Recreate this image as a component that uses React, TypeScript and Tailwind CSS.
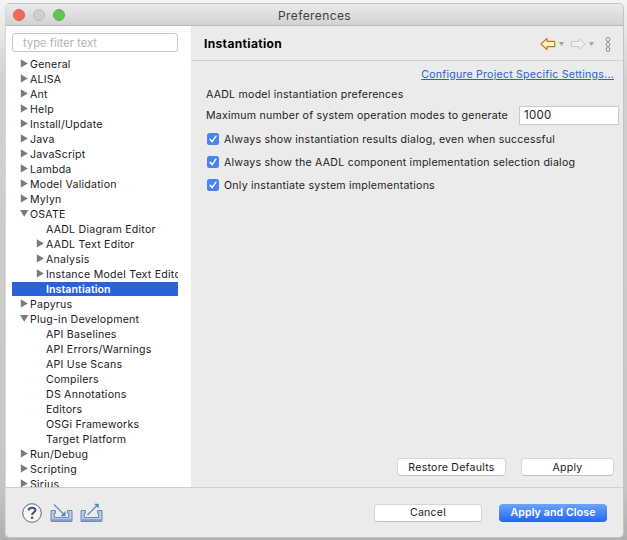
import React from "react";

type Node = { label: string; level: 0 | 1; state?: "closed" | "open"; selected?: boolean };

const nodes: Node[] = [
  { label: "General", level: 0, state: "closed" },
  { label: "ALISA", level: 0, state: "closed" },
  { label: "Ant", level: 0, state: "closed" },
  { label: "Help", level: 0, state: "closed" },
  { label: "Install/Update", level: 0, state: "closed" },
  { label: "Java", level: 0, state: "closed" },
  { label: "JavaScript", level: 0, state: "closed" },
  { label: "Lambda", level: 0, state: "closed" },
  { label: "Model Validation", level: 0, state: "closed" },
  { label: "Mylyn", level: 0, state: "closed" },
  { label: "OSATE", level: 0, state: "open" },
  { label: "AADL Diagram Editor", level: 1 },
  { label: "AADL Text Editor", level: 1, state: "closed" },
  { label: "Analysis", level: 1, state: "closed" },
  { label: "Instance Model Text Editor", level: 1, state: "closed" },
  { label: "Instantiation", level: 1, selected: true },
  { label: "Papyrus", level: 0, state: "closed" },
  { label: "Plug-in Development", level: 0, state: "open" },
  { label: "API Baselines", level: 1 },
  { label: "API Errors/Warnings", level: 1 },
  { label: "API Use Scans", level: 1 },
  { label: "Compilers", level: 1 },
  { label: "DS Annotations", level: 1 },
  { label: "Editors", level: 1 },
  { label: "OSGi Frameworks", level: 1 },
  { label: "Target Platform", level: 1 },
  { label: "Run/Debug", level: 0, state: "closed" },
  { label: "Scripting", level: 0, state: "closed" },
  { label: "Sirius", level: 0, state: "closed" },
];

function Row({ label, level, state, selected }: Node) {
  return (
    <div className={`flex h-[15px] shrink-0 items-center ${level ? "pl-[24px]" : "pl-[8px]"}`}>
      <svg className="mr-[1px] mb-[2px] h-[9px] w-[9px] shrink-0" viewBox="0 0 9 9">
        {state === "closed" && <path d="M0.8 0.3 L7.8 4.4 L0.8 8.5Z" fill="#7b7b7b" />}
        {state === "open" && <path d="M0 1 L8.4 1 L4.2 7.8Z" fill="#7b7b7b" />}
      </svg>
      <span className={`whitespace-nowrap ${selected ? "font-semibold tracking-[0.08px] text-white" : ""}`}>{label}</span>
    </div>
  );
}

function Check({ children }: { children: React.ReactNode }) {
  return (
    <div className="flex h-[23px] items-center">
      <svg className="mr-[5px] mb-[2px] h-[12px] w-[12px]" viewBox="0 0 12 12">
        <rect width="12" height="12" rx="2.5" fill="#4683f4" />
        <path d="M3.1 6.3 L5.2 8.7 L8.9 3.2" fill="none" stroke="#fff" strokeWidth="1.5" strokeLinecap="round" strokeLinejoin="round" />
      </svg>
      <span className="whitespace-nowrap">{children}</span>
    </div>
  );
}

function Tray({ out }: { out?: boolean }) {
  return (
    <svg className="h-[20px] w-[23px]" viewBox="0 0 23 20">
      <path d="M1 7.5 H5.5 V10.2 H4.4 V14.5 H18.6 V10.2 H17.5 V7.5 H22 V18.5 H1Z" fill="#b9c7e4" stroke="#6f86b4" strokeWidth="1" />
      <path d="M1.5 16.2 H21.5 V18.3 H1.5Z" fill="#8799c8" />
      {out ? (
        <g stroke="#4f8fbf" strokeWidth="1.2" fill="#4f8fbf">
          <path d="M7.5 12 L17.5 2" />
          <path d="M14.5 1 H18.5 V5Z" strokeWidth="0.5" />
        </g>
      ) : (
        <g stroke="#4f8fbf" strokeWidth="1.2" fill="#4f8fbf">
          <path d="M4 1.5 L14 11.5" />
          <path d="M15.3 8.5 V13 H11Z" strokeWidth="0.5" />
        </g>
      )}
    </svg>
  );
}

function Arrow({ forward }: { forward?: boolean }) {
  return (
    <svg className="h-[14px] w-[16px]" viewBox="0 0 16 14">
      {forward ? (
        <path d="M15 7 L9 1.3 V4.4 H1.3 V9.6 H9 V12.7Z" fill="#f0f0f0" stroke="#c9c9c9" strokeLinejoin="round" />
      ) : (
        <path d="M1 7 L7 1.3 V4.4 H14.7 V9.6 H7 V12.7Z" fill="#fff3c4" stroke="#b87b1c" strokeWidth="1.1" strokeLinejoin="round" />
      )}
    </svg>
  );
}

function Caret() {
  return (
    <svg className="h-[4px] w-[5px]" viewBox="0 0 5 4">
      <path d="M0 0 H5 L2.5 4Z" fill="#a3a3a3" />
    </svg>
  );
}

const button = "flex h-[18px] items-center justify-center rounded-[4px] border border-[#d6d6d6] border-b-[#c0c0c0] bg-white";

export default function App() {
  return (
    <div className="h-[540px] w-[627px] overflow-hidden bg-[linear-gradient(#f4f4f4,#d0d0d0_15%,#c6c6c6_90%,#b0b0b0)] pt-[3px] pl-[5px] font-['Inter','Liberation_Sans',sans-serif] text-[10.6px] leading-[15px] tracking-[0.23px] text-[#1c1c1c]">
      <div className="flex h-[535px] w-[619px] flex-col overflow-hidden rounded-[5px] border border-[#c4c4c4] border-l-[#d8d8d8] bg-[#ebebeb]">
        <div className="flex h-[22px] shrink-0 items-center border-b border-[#b9b9b9] bg-[linear-gradient(#eaeaea,#d2d2d2)]">
          <div className="flex w-[120px] gap-[8px] pl-[7px]">
            <i className="size-[12px] rounded-full border border-[#df5d53] bg-[#ed6a5e]" />
            <i className="size-[12px] rounded-full border border-[#bdbdbd] bg-[#cfcfcf]" />
            <i className="size-[12px] rounded-full border border-[#58b947] bg-[#61c554]" />
          </div>
          <div className="w-[377px] pt-px text-center text-[12px] tracking-[0.4px] text-[#414141]">Preferences</div>
        </div>

        <div className="flex h-[462px] shrink-0 border-b border-[#cfcfcf]">
          <div className="flex w-[185px] shrink-0 flex-col bg-white pt-[7px] pl-[6px]">
            <div className="flex h-[19px] w-[166px] shrink-0 items-center rounded-[3px] border border-[#c6c6c6] pt-px pl-[10px] text-[11px] tracking-[0.1px] text-[#b4b4b4]">type filter text</div>
            <div className="mt-[5px] flex min-h-0 w-[166px] flex-1 flex-col overflow-hidden text-[#1a1a1a]">
              {nodes.map((n) =>
                n.selected ? (
                  <div key={n.label} className="h-[15px] shrink-0 bg-[linear-gradient(#2962d9,#2962d9)] bg-[length:100%_14px] bg-no-repeat">
                    <Row {...n} />
                  </div>
                ) : (
                  <Row key={n.label} {...n} />
                ),
              )}
            </div>
          </div>

          <div className="flex min-w-0 flex-1 flex-col">
            <div className="flex h-[35px] shrink-0 items-center border-b border-[#d0d0d0] pl-[13px]">
              <h1 className="flex-1 text-[12px] font-bold tracking-[0.35px] text-black">Instantiation</h1>
              <div className="flex items-center pt-[2px] pr-[12px]">
                <Arrow />
                <span className="ml-[3px]"><Caret /></span>
                <span className="ml-[6px]"><Arrow forward /></span>
                <span className="ml-[3px]"><Caret /></span>
                <svg className="ml-[11px] h-[15px] w-[6px]" viewBox="0 0 6 15" fill="#f7f7f7" stroke="#777777" strokeWidth="0.9">
                  <circle cx="3" cy="2.5" r="1.9" />
                  <circle cx="3" cy="7.5" r="1.9" />
                  <circle cx="3" cy="12.5" r="1.9" />
                </svg>
              </div>
            </div>
            <div className="flex h-[26px] shrink-0 items-center justify-end pr-[9px] text-[#2a62cf] underline">Configure Project Specific Settings...</div>
            <div className="flex flex-1 flex-col pl-[15px]">
              <div className="h-[19px]">AADL model instantiation preferences</div>
              <div className="flex h-[19px] items-center">
                <span className="mb-px w-[313px] whitespace-nowrap">Maximum number of system operation modes to generate</span>
                <div className="flex h-[19px] w-[100px] items-center border border-[#c9c9c9] bg-white pl-[4px] text-[11.5px]">1000</div>
              </div>
              <div className="mt-[3px] pl-[1px]">
                <Check>Always show instantiation results dialog, even when successful</Check>
                <Check>Always show the AADL component implementation selection dialog</Check>
                <Check>Only instantiate system implementations</Check>
              </div>
              <div className="mt-auto mb-[11px] flex justify-end gap-[15px] pr-[9px]">
                <div className={`${button} w-[109px]`}>Restore Defaults</div>
                <div className={`${button} w-[93px]`}>Apply</div>
              </div>
            </div>
          </div>
        </div>

        <div className="flex flex-1 items-center pl-[16px]">
          <svg className="h-[20px] w-[20px]" viewBox="0 0 20 20">
            <circle cx="10" cy="10" r="9.3" fill="#f6f6f8" stroke="#546482" />
            <path d="M6.7 7.4 C6.8 3.9 13.4 3.9 13.4 7.3 C13.4 9.6 10.1 9.4 10.1 12.1" fill="none" stroke="#405477" strokeWidth="2.1" />
            <circle cx="10.1" cy="14.8" r="1.3" fill="#405477" />
          </svg>
          <span className="ml-[8px]"><Tray /></span>
          <span className="ml-[7px]"><Tray out /></span>
          <div className="ml-auto flex gap-[17px] pr-[16px]">
            <div className={`${button} w-[108px]`}>Cancel</div>
            <div className="flex h-[18px] w-[108px] items-center justify-center rounded-[4px] bg-[linear-gradient(#6ca3f9,#2465f0)] font-semibold tracking-[0.1px] text-white">Apply and Close</div>
          </div>
        </div>
      </div>
    </div>
  );
}
